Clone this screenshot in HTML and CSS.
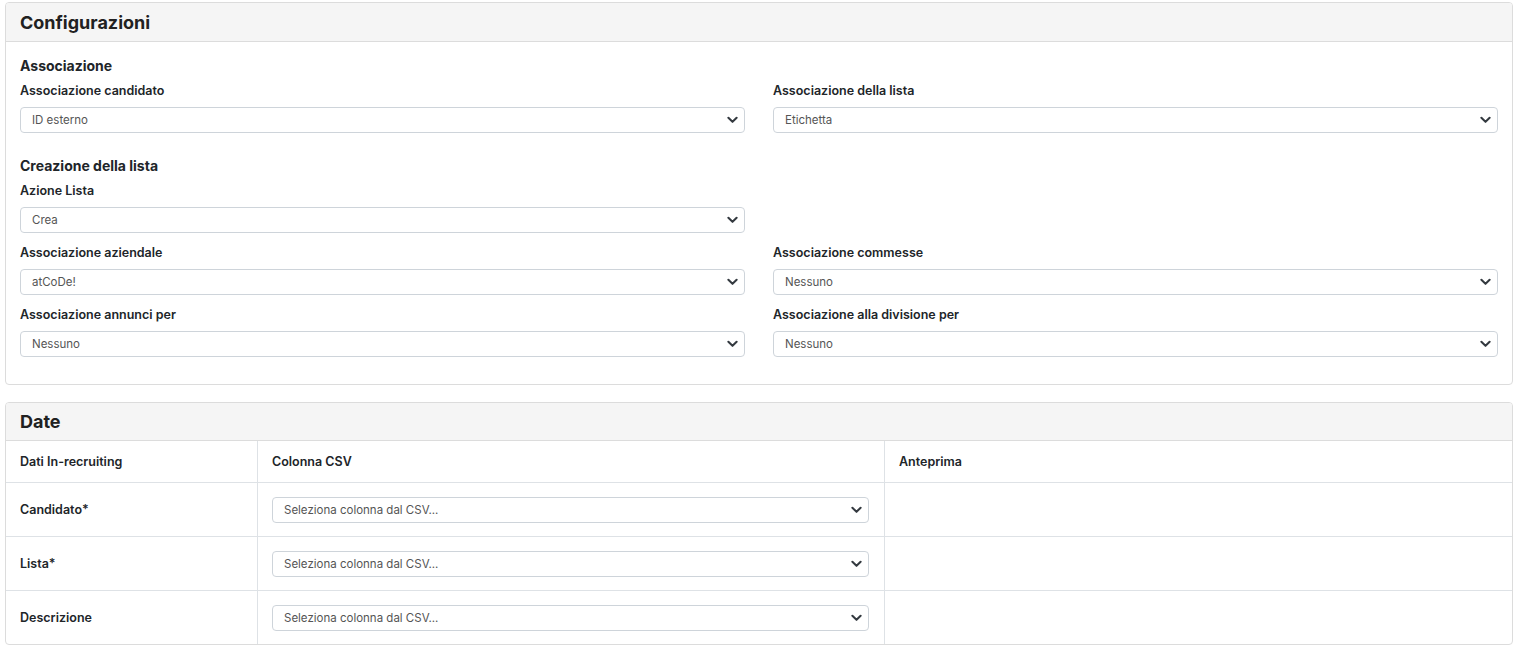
FILE: index.html
```html
<!DOCTYPE html>
<html lang="it">
<head>
  <meta charset="UTF-8">
  <title>Importazione liste</title>
  <link rel="stylesheet" href="styles.css">
</head>
<body>

  <div class="card">
    <div class="card-header"><h3>Configurazioni</h3></div>
    <div class="card-body">
      <h4 class="group-title">Associazione</h4>
      <div class="form-row">
        <div class="field">
          <label>Associazione candidato</label>
          <div class="select-wrap">
            <select><option>ID esterno</option></select>
            <svg class="chevron" viewBox="0 0 12 8"><path d="M1.5 1.5 6 6l4.5-4.5"/></svg>
          </div>
        </div>
        <div class="field">
          <label>Associazione della lista</label>
          <div class="select-wrap">
            <select><option>Etichetta</option></select>
            <svg class="chevron" viewBox="0 0 12 8"><path d="M1.5 1.5 6 6l4.5-4.5"/></svg>
          </div>
        </div>
      </div>

      <h4 class="group-title">Creazione della lista</h4>
      <div class="form-row">
        <div class="field">
          <label>Azione Lista</label>
          <div class="select-wrap">
            <select><option>Crea</option></select>
            <svg class="chevron" viewBox="0 0 12 8"><path d="M1.5 1.5 6 6l4.5-4.5"/></svg>
          </div>
        </div>
        <div class="field"></div>
      </div>
      <div class="form-row">
        <div class="field">
          <label>Associazione aziendale</label>
          <div class="select-wrap">
            <select><option>atCoDe!</option></select>
            <svg class="chevron" viewBox="0 0 12 8"><path d="M1.5 1.5 6 6l4.5-4.5"/></svg>
          </div>
        </div>
        <div class="field">
          <label>Associazione commesse</label>
          <div class="select-wrap">
            <select><option>Nessuno</option></select>
            <svg class="chevron" viewBox="0 0 12 8"><path d="M1.5 1.5 6 6l4.5-4.5"/></svg>
          </div>
        </div>
      </div>
      <div class="form-row">
        <div class="field">
          <label>Associazione annunci per</label>
          <div class="select-wrap">
            <select><option>Nessuno</option></select>
            <svg class="chevron" viewBox="0 0 12 8"><path d="M1.5 1.5 6 6l4.5-4.5"/></svg>
          </div>
        </div>
        <div class="field">
          <label>Associazione alla divisione per</label>
          <div class="select-wrap">
            <select><option>Nessuno</option></select>
            <svg class="chevron" viewBox="0 0 12 8"><path d="M1.5 1.5 6 6l4.5-4.5"/></svg>
          </div>
        </div>
      </div>
    </div>
  </div>

  <div class="card">
    <div class="card-header"><h3>Date</h3></div>
    <table class="map-table">
      <thead>
        <tr>
          <th class="col-field">Dati In-recruiting</th>
          <th class="col-csv">Colonna CSV</th>
          <th>Anteprima</th>
        </tr>
      </thead>
      <tbody>
        <tr>
          <td class="row-label">Candidato*</td>
          <td>
            <div class="select-wrap">
              <select><option>Seleziona colonna dal CSV...</option></select>
              <svg class="chevron" viewBox="0 0 12 8"><path d="M1.5 1.5 6 6l4.5-4.5"/></svg>
            </div>
          </td>
          <td></td>
        </tr>
        <tr>
          <td class="row-label">Lista*</td>
          <td>
            <div class="select-wrap">
              <select><option>Seleziona colonna dal CSV...</option></select>
              <svg class="chevron" viewBox="0 0 12 8"><path d="M1.5 1.5 6 6l4.5-4.5"/></svg>
            </div>
          </td>
          <td></td>
        </tr>
        <tr>
          <td class="row-label">Descrizione</td>
          <td>
            <div class="select-wrap">
              <select><option>Seleziona colonna dal CSV...</option></select>
              <svg class="chevron" viewBox="0 0 12 8"><path d="M1.5 1.5 6 6l4.5-4.5"/></svg>
            </div>
          </td>
          <td></td>
        </tr>
      </tbody>
    </table>
  </div>

</body>
</html>
```

FILE: styles.css
```css
body {
  font-family: Inter, "Open Sans", sans-serif;
  background: #fff;
  color: #212529;
  margin: 0;
  padding: 2px 17px 0 5px;
}

.card {
  border: 1px solid #dcdcdc;
  border-radius: 4px;
  background: #fff;
  margin-bottom: 17px;
  overflow: hidden;
}

.card-header {
  background: #f5f5f5;
  border-bottom: 1px solid #dcdcdc;
  height: 38px;
  padding: 0 14px;
  display: flex;
  align-items: center;
}

.card + .card .card-header {
  height: 37px;
}

.card-header h3 {
  margin: 0;
  font-size: 18px;
  font-weight: 700;
  color: #212121;
}

.card-body {
  padding: 14px 14px 15px;
}

.group-title {
  margin: 0 0 7px;
  font-size: 14px;
  font-weight: 700;
  line-height: 20px;
}

.form-row {
  display: grid;
  grid-template-columns: 1fr 1fr;
  column-gap: 28px;
  margin-bottom: 12px;
}

.form-row + .group-title {
  margin-top: 23px;
}

.field label {
  display: block;
  font-size: 12.5px;
  font-weight: 600;
  line-height: 16px;
  margin-bottom: 8px;
}

.select-wrap {
  position: relative;
}

.select-wrap select {
  -webkit-appearance: none;
  appearance: none;
  width: 100%;
  height: 26px;
  padding: 0 30px 0 11px;
  border: 1px solid #ced4da;
  border-radius: 4px;
  background: #fff;
  font-family: inherit;
  font-size: 11.5px;
  color: #555;
  outline: none;
}

.chevron {
  position: absolute;
  right: 7px;
  top: 9px;
  width: 11px;
  height: 8px;
  fill: none;
  stroke: #343a40;
  stroke-width: 2.2;
  stroke-linecap: round;
  stroke-linejoin: round;
  pointer-events: none;
}

.map-table {
  width: 100%;
  border-collapse: collapse;
  font-size: 12.5px;
}

.map-table th,
.map-table td {
  border-left: 1px solid #dee2e6;
  border-top: 1px solid #dee2e6;
  text-align: left;
  padding: 0 15px 0 14px;
}

.map-table th:first-child,
.map-table td:first-child {
  border-left: none;
}

.map-table thead tr:first-child th {
  border-top: none;
}

.map-table th {
  font-weight: 600;
  height: 41px;
}

.map-table td {
  height: 53px;
}

.col-field {
  width: 222px;
}

.col-csv {
  width: 597px;
}

.row-label {
  font-weight: 600;
}
```
